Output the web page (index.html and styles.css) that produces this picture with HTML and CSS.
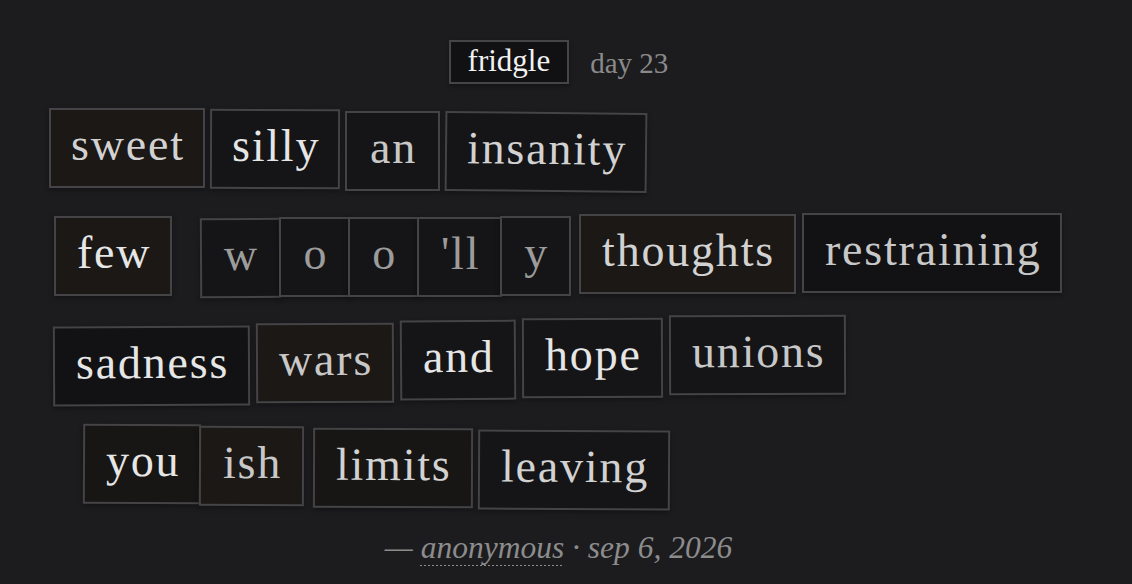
FILE: index.html
```html
<!DOCTYPE html>
<html lang="en">
<head>
<meta charset="utf-8">
<title>fridgle</title>
<link rel="stylesheet" href="styles.css">
</head>
<body>
<main class="page">
  <header class="head">
    <span class="brand">fridgle</span>
    <span class="day">day 23</span>
  </header>

  <section class="poem">
    <div class="row row-1">
      <span class="tile warm" style="--y:0px;--r:0deg">sweet</span>
      <span class="tile bright" style="--y:1px;--r:0.2deg">silly</span>
      <span class="tile soft wide" style="--y:3px;--r:0deg">an</span>
      <span class="tile" style="--y:4px;--r:0.6deg">insanity</span>
    </div>
    <div class="row row-2">
      <span class="tile warm bright" style="--y:4px;--r:0deg">few</span>
      <span class="group">
        <span class="tile piece dim" style="--y:6px;--r:-0.3deg">w</span>
        <span class="tile piece dim" style="--y:5px;--r:0deg">o</span>
        <span class="tile piece dim" style="--y:5px;--r:0deg">o</span>
        <span class="tile piece dim" style="--y:5px;--r:0deg">'ll</span>
        <span class="tile piece dim" style="--y:4px;--r:0deg">y</span>
      </span>
      <span class="tile warm spaced" style="--y:2px;--r:0deg">thoughts</span>
      <span class="tile soft deep" style="--y:1px;--r:0deg">restraining</span>
    </div>
    <div class="row row-3">
      <span class="tile bright deep" style="--y:10px;--r:-0.3deg">sadness</span>
      <span class="tile warm soft" style="--y:7px;--r:-0.3deg">wars</span>
      <span class="tile bright" style="--y:4px;--r:-0.4deg">and</span>
      <span class="tile bright" style="--y:2px;--r:-0.2deg">hope</span>
      <span class="tile soft" style="--y:-1px;--r:-0.2deg">unions</span>
    </div>
    <div class="row row-4">
      <span class="group">
        <span class="tile mid bright" style="--y:4px;--r:0.3deg">you</span>
        <span class="tile piece warm soft" style="--y:6px;--r:0.2deg">ish</span>
      </span>
      <span class="tile mid spaced" style="--y:8px;--r:0.2deg">limits</span>
      <span class="tile" style="--y:10px;--r:0.3deg">leaving</span>
    </div>
  </section>

  <footer class="byline">
    — <span class="author">anonymous</span> · sep 6, 2026
  </footer>
</main>
</body>
</html>
```

FILE: styles.css
```css
html, body {
  margin: 0;
  padding: 0;
  background: #1c1c1f;
}

body {
  font-family: "Liberation Serif", "Times New Roman", serif;
  color: #d8d8d8;
}

.page {
  width: 1114px;
  padding-top: 40px;
  display: flex;
  flex-direction: column;
  align-items: center;
}

.head {
  display: flex;
  align-items: center;
  gap: 21px;
  height: 44px;
  margin-left: 3px;
}

.brand {
  display: block;
  border: 2px solid #454545;
  background: #111113;
  color: #f2f2f2;
  font-size: 31px;
  line-height: 34px;
  padding: 2px 17px 4px;
  box-shadow: 0 2px 4px rgba(0, 0, 0, 0.35);
}

.day {
  color: #8a8a8a;
  font-size: 29px;
  line-height: 34px;
  padding-top: 2px;
}

.poem {
  width: 1016px;
  margin-top: 24px;
  display: flex;
  flex-direction: column;
  gap: 24px;
}

.row {
  display: flex;
  align-items: flex-start;
  gap: 6px;
}

.row-1 { gap: 5px; }
.row-2 { padding-left: 5px; }
.row-3 { padding-left: 4px; }
.row-4 { padding-left: 34px; }

.row-2 .group { margin-left: 22px; }

.spaced { margin-left: 2px; }

.group {
  display: flex;
  align-items: flex-start;
}

.tile {
  display: block;
  border: 2px solid #444446;
  background: #151517;
  color: #d2d2d2;
  font-size: 46px;
  letter-spacing: 1.8px;
  line-height: 44px;
  padding: 13px 19px 19px 21px;
  white-space: nowrap;
  box-shadow: 0 2px 5px rgba(0, 0, 0, 0.35);
  transform: translateY(var(--y)) rotate(var(--r));
}

.row-1 .tile {
  padding-left: 20px;
  padding-right: 18px;
}

.row-1 .wide {
  padding-left: 23px;
  padding-right: 21px;
}

.piece {
  padding-left: 22px;
  padding-right: 20px;
}

.group .tile + .tile {
  margin-left: -2px;
}

.warm { background: #1b1816; }
.mid { background: #181614; }
.deep { background: #121214; }

.bright { color: #e6e6e6; }
.soft { color: #c8c8c8; }
.dim { color: #9c9c9c; }

.byline {
  margin-top: 30px;
  font-style: italic;
  font-size: 31.5px;
  line-height: 36px;
  color: #8c8c8c;
  margin-left: 3px;
}

.author {
  text-decoration: underline dotted #8c8c8c;
  text-decoration-thickness: 2px;
  text-underline-offset: 7px;
}
```
